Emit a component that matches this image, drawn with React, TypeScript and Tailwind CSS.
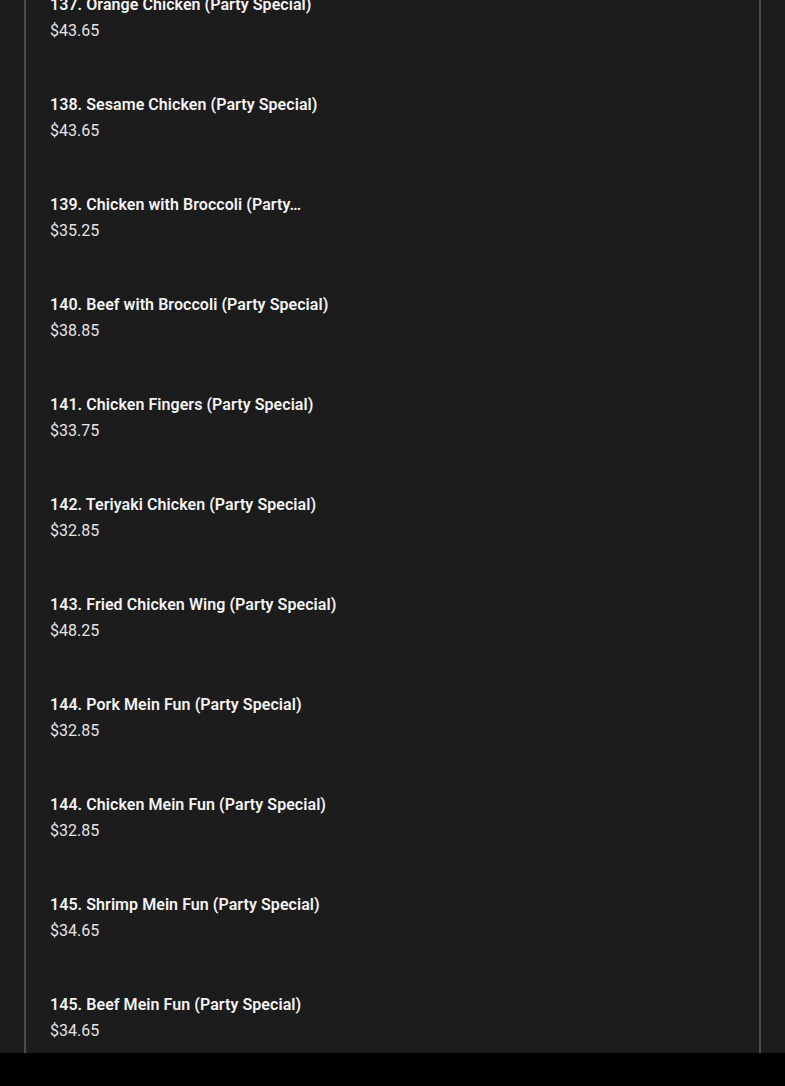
import React from 'react';

interface MenuItem {
  name: string;
  price: string;
}

const items: MenuItem[] = [
  { name: '137. Orange Chicken (Party Special)', price: '$43.65' },
  { name: '138. Sesame Chicken (Party Special)', price: '$43.65' },
  { name: '139. Chicken with Broccoli (Party…', price: '$35.25' },
  { name: '140. Beef with Broccoli (Party Special)', price: '$38.85' },
  { name: '141. Chicken Fingers (Party Special)', price: '$33.75' },
  { name: '142. Teriyaki Chicken (Party Special)', price: '$32.85' },
  { name: '143. Fried Chicken Wing (Party Special)', price: '$48.25' },
  { name: '144. Pork Mein Fun (Party Special)', price: '$32.85' },
  { name: '144. Chicken Mein Fun (Party Special)', price: '$32.85' },
  { name: '145. Shrimp Mein Fun (Party Special)', price: '$34.65' },
  { name: '145. Beef Mein Fun (Party Special)', price: '$34.65' },
];

const MenuRow: React.FC<{ item: MenuItem }> = ({ item }) => (
  <div className="h-[100px] pt-[12px] pl-[24px]">
    <div className="text-[16px] leading-[24px] font-semibold tracking-[0.06px] text-[#f2f2f2] whitespace-nowrap">
      {item.name}
    </div>
    <div className="text-[16px] leading-[24px] mt-[2px] text-[#e4e4e4]">{item.price}</div>
  </div>
);

export default function App() {
  return (
    <div
      className="h-[1086px] w-[785px] flex flex-col bg-black overflow-hidden"
      style={{ fontFamily: 'Roboto, "Liberation Sans", sans-serif' }}
    >
      <div className="h-[1053px] bg-[#1c1c1d] overflow-hidden">
        <div className="ml-[24px] w-[737px] h-full border-x-2 border-[#4b4b4b] overflow-hidden">
          <div className="mt-[-19px] flex flex-col">
            {items.map((it, i) => (
              <MenuRow key={i} item={it} />
            ))}
          </div>
        </div>
      </div>
      <div className="flex-1 bg-black" />
    </div>
  );
}
